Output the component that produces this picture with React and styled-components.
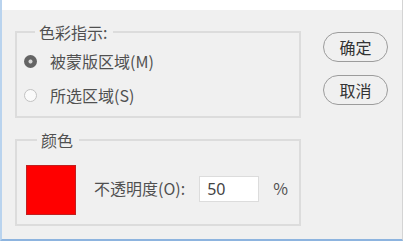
import React, { useState } from 'react';
import styled, { createGlobalStyle } from 'styled-components';

const GlobalStyle = createGlobalStyle`
    html, body {
        margin: 0;
        padding: 0;
        background: #f0f0f0;
    }
    * {
        box-sizing: border-box;
    }
`;

export default function App() {
    const [area, setArea] = useState('mask');
    const [opacity, setOpacity] = useState('50');

    return (
        <Window>
            <GlobalStyle />
            <TitleStrip />
            <Body>
                <Column>
                    <Group $top={8} $bottom={10} $left={7}>
                        <Legend>色彩指示:</Legend>
                        <RadioRow onClick={() => setArea('mask')}>
                            <Radio $checked={area === 'mask'} />
                            <span>被蒙版区域(M)</span>
                        </RadioRow>
                        <RadioRow onClick={() => setArea('selection')}>
                            <Radio $checked={area === 'selection'} />
                            <span>所选区域(S)</span>
                        </RadioRow>
                    </Group>
                    <Group $top={15} $bottom={9} $left={9}>
                        <Legend>颜色</Legend>
                        <ColorRow>
                            <Swatch />
                            <Label>不透明度(O):</Label>
                            <NumberInput value={opacity} onChange={(e) => setOpacity(e.target.value)} />
                            <Label>%</Label>
                        </ColorRow>
                    </Group>
                </Column>
                <Buttons>
                    <PillButton>确定</PillButton>
                    <PillButton>取消</PillButton>
                </Buttons>
            </Body>
        </Window>
    )
}

const Window = styled.div`
    width: 403px;
    height: 241px;
    background: #f0f0f0;
    border-left: 2px solid #b9d3ee;
    border-right: 1px solid #d4d4d4;
    border-bottom: 2px solid #8db4df;
    font-family: "Noto Sans CJK SC", "Noto Sans", sans-serif;
    font-size: 16px;
    color: #505050;
    overflow: hidden;
`;

const TitleStrip = styled.div`
    height: 10px;
    background: #fff;
`;

const Body = styled.div`
    display: flex;
    padding: 12px 0 0 13px;
`;

const Column = styled.div`
    display: flex;
    flex-direction: column;
    gap: 12px;
    width: 286px;
`;

const Group = styled.fieldset`
    margin: 0;
    min-width: 0;
    border: 2px solid #dcdcdc;
    padding: ${p => p.$top}px 0 ${p => p.$bottom}px ${p => p.$left}px;
    display: flex;
    flex-direction: column;
    gap: 12px;
`;

const Legend = styled.legend`
    margin-left: 11px;
    padding: 0 6px 0 4px;
    line-height: 20px;
    color: #505050;
`;

const RadioRow = styled.label`
    display: flex;
    align-items: center;
    gap: 13px;
    height: 22px;
    cursor: pointer;
    line-height: 22px;
`;

const Radio = styled.span`
    width: 13px;
    height: 13px;
    border-radius: 50%;
    flex-shrink: 0;
    border: ${p => p.$checked ? 'none' : '1px solid #c2c2c2'};
    background: ${p => p.$checked
        ? 'radial-gradient(circle, #d8d8d8 0 1.6px, #646464 2.4px)'
        : '#fafafa'};
`;

const ColorRow = styled.div`
    display: flex;
    align-items: center;
`;

const Swatch = styled.div`
    width: 50px;
    height: 50px;
    background: #ff0000;
    border: 1px solid #c02020;
    margin-right: 18px;
`;

const Label = styled.span`
    line-height: 22px;
    margin-top: -4px;
`;

const NumberInput = styled.input`
    width: 60px;
    height: 26px;
    margin: -2px 14px 0 14px;
    padding: 0 0 0 7px;
    border: 1px solid #dcdcdc;
    background: #fff;
    font-family: "Noto Sans", "Noto Sans CJK SC", sans-serif;
    font-size: 16px;
    color: #444;
    outline: none;
`;

const Buttons = styled.div`
    display: flex;
    flex-direction: column;
    gap: 13px;
    padding-top: 10px;
    margin-left: 22px;
`;

const PillButton = styled.button`
    width: 65px;
    height: 30px;
    border: 1.5px solid #9c9c9c;
    border-radius: 15px;
    background: #f0f0f0;
    font-family: "Noto Sans CJK SC", sans-serif;
    font-size: 16px;
    color: #333;
    padding: 0;
    line-height: 26px;
    cursor: pointer;
`;
